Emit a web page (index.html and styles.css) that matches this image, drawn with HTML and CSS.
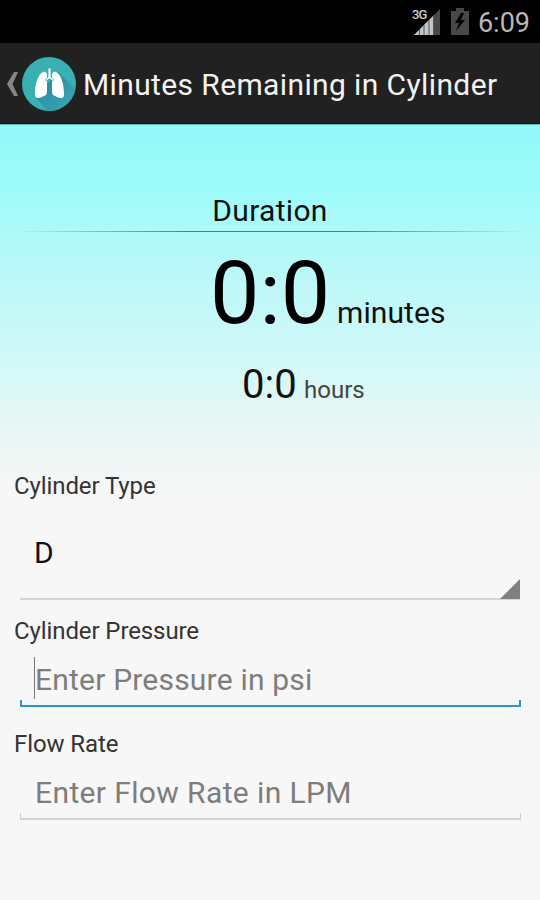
FILE: index.html
```
<!DOCTYPE html>
<html lang="en">
<head>
<meta charset="utf-8">
<title>Minutes Remaining in Cylinder</title>
<link rel="stylesheet" href="styles.css">
</head>
<body>
<header class="status">
  <svg class="signal" width="30" height="30" viewBox="0 0 30 30">
    <path d="M3 28 29 2V28Z" fill="#484848"/>
    <path d="M3 28 22 9V28Z" fill="#c4c4c4"/>
    <path d="M8.500 22V28M13 18V28M18 13V28M22.500 8V28" stroke="#555" stroke-width="1"/>
    <text x="1" y="12" class="net">3G</text>
  </svg>
  <svg class="battery" width="18" height="27" viewBox="0 0 18 27"><path d="M5 0h8v3h5v24H0V3h5Z" fill="#484848"/><path d="M10 5 4 15h4l-3 8 9-11h-4l3-7Z" fill="#000"/></svg>
  <span class="clock">6:09</span>
</header>
<nav class="bar">
  <svg class="back" width="14" height="26" viewBox="0 0 14 26"><path d="M8 1h4L6.500 13 12 25H8L1 13Z" fill="#858585"/></svg>
  <svg class="logo" width="54" height="54" viewBox="0 0 54 54">
    <defs>
      <clipPath id="disc"><circle cx="27" cy="27" r="27"/></clipPath>
      <linearGradient id="shade" x1="0" y1="0" x2="1" y2="1"><stop offset=".4" stop-color="#2f91a6"/><stop offset="1" stop-color="#38aeb4"/></linearGradient>
    </defs>
    <circle cx="27" cy="27" r="27" fill="#39b1b3"/>
    <path clip-path="url(#disc)" d="M36 15 54 33V54H26L13 40Z" fill="url(#shade)"/>
    <path d="M21 15c3-1 4 1 4 4v13c0 3 0 5-1 6-3 1-5 3-8 3-2 0-3-1-3-4 0-8 2-19 8-22ZM34 15c-3-1-4 1-4 4v13c0 3 0 5 1 6 3 1 5 3 8 3 2 0 3-1 3-4 0-8-2-19-8-22Z" fill="#fff"/>
    <path d="M26 11h3v9l2.500 2.500-1 1.500-3-2.500-3 2.500-1-1.500L26 20Z" fill="#fff" stroke="#39a6b0" stroke-width=".8"/>
  </svg>
  <h1 class="title">Minutes Remaining in Cylinder</h1>
</nav>
<main class="content">
  <section class="result">
    <h2 class="heading">Duration</h2>
    <div class="rule"></div>
    <p class="minutes"><span class="big">0:0</span><span class="unit">minutes</span></p>
    <p class="hours"><span class="mid">0:0</span><span class="small">hours</span></p>
  </section>
  <section class="form">
    <div class="label">Cylinder Type</div>
    <div class="spinner"><span>D</span><svg class="corner" width="20" height="20" viewBox="0 0 20 20"><path d="M20 0V20H0Z" fill="#808080"/></svg></div>
    <div class="label">Cylinder Pressure</div>
    <div class="field active"><i class="caret"></i><span class="hint">Enter Pressure in psi</span></div>
    <div class="label">Flow Rate</div>
    <div class="field"><span class="hint flow">Enter Flow Rate in LPM</span></div>
  </section>
</main>
</body>
</html>
```
FILE: styles.css
```
* { box-sizing: border-box; margin: 0; padding: 0; }
body { width: 540px; height: 900px; overflow: hidden; font-family: Roboto, sans-serif; background: #f7f7f7; color: #111; }
.status { height: 43px; background: #000; display: flex; align-items: center; justify-content: flex-end; padding-right: 10px; }
.net { font: 500 13px Roboto, sans-serif; fill: #ccc; stroke: #000; stroke-width: 2px; paint-order: stroke; letter-spacing: -1px; }
.clock { font-size: 27px; line-height: 43px; color: #b8b8b8; padding-top: 3px; }
.battery { margin: 0 9px 0 10px; }
.bar { height: 81px; background: #212121; display: flex; align-items: center; padding: 1px 0 0 6px; border-bottom: 1px solid #111; }
.logo { margin-left: 2px; }
.title { font-size: 30px; font-weight: 400; letter-spacing: .38px; color: #f3f3f3; margin-left: 7px; white-space: nowrap; padding-top: 1px; }
.content { height: 776px; background: linear-gradient(#91f8f8, #9cfbfa 60px, #bdf8f8 155px, #d6f8f8 250px, #e3f7f4 285px, #f7f7f7 370px); border-top: 1px solid #6cb5b5; }
.result { height: 341px; padding-top: 68px; }
.heading { font-size: 30px; line-height: 36px; font-weight: 400; text-align: center; letter-spacing: .3px; }
.rule { height: 1px; margin: 2px 14px 0; background: linear-gradient(90deg, transparent, #4d7f80 35%, #4d7f80 65%, transparent); }
.minutes { display: flex; align-items: baseline; height: 118px; margin: 2px 0 0 210px; line-height: 118px; color: #000; }
.big { font-size: 88px; width: 127px; }
.unit { font-size: 30px; letter-spacing: .1px; color: #111; }
.hours { display: flex; align-items: baseline; margin: 8px 0 0 242px; line-height: 50px; }
.mid { font-size: 40px; width: 62px; }
.small { font-size: 24px; color: #444; }
.label { font-size: 24px; line-height: 40px; padding-left: 14px; color: #333; letter-spacing: -.1px; }
.spinner { position: relative; height: 94px; margin: 0 20px 11px; padding-left: 14px; font-size: 30px; line-height: 94px; border-bottom: 2px solid #d5d5d5; }
.corner { position: absolute; right: 0; bottom: -1px; }
.field { position: relative; height: 54px; margin: 2px 19px 17px 20px; padding-left: 15px; font-size: 30px; line-height: 53px; color: #7d7d7d; border-bottom: 2px solid #d2d2d2; }
.field::before, .field::after { content: ""; position: absolute; bottom: 0; width: 1px; height: 5px; background: #ccc; }
.field::before { left: 0; }
.field::after { right: 0; }
.hint { letter-spacing: .2px; }
.flow { letter-spacing: .38px; }
.active { border-color: #2e98c3; }
.active::before, .active::after { width: 2px; background: #2e98c3; }
.caret { position: absolute; left: 14px; top: 4px; width: 1px; height: 42px; background: #777; }
```
